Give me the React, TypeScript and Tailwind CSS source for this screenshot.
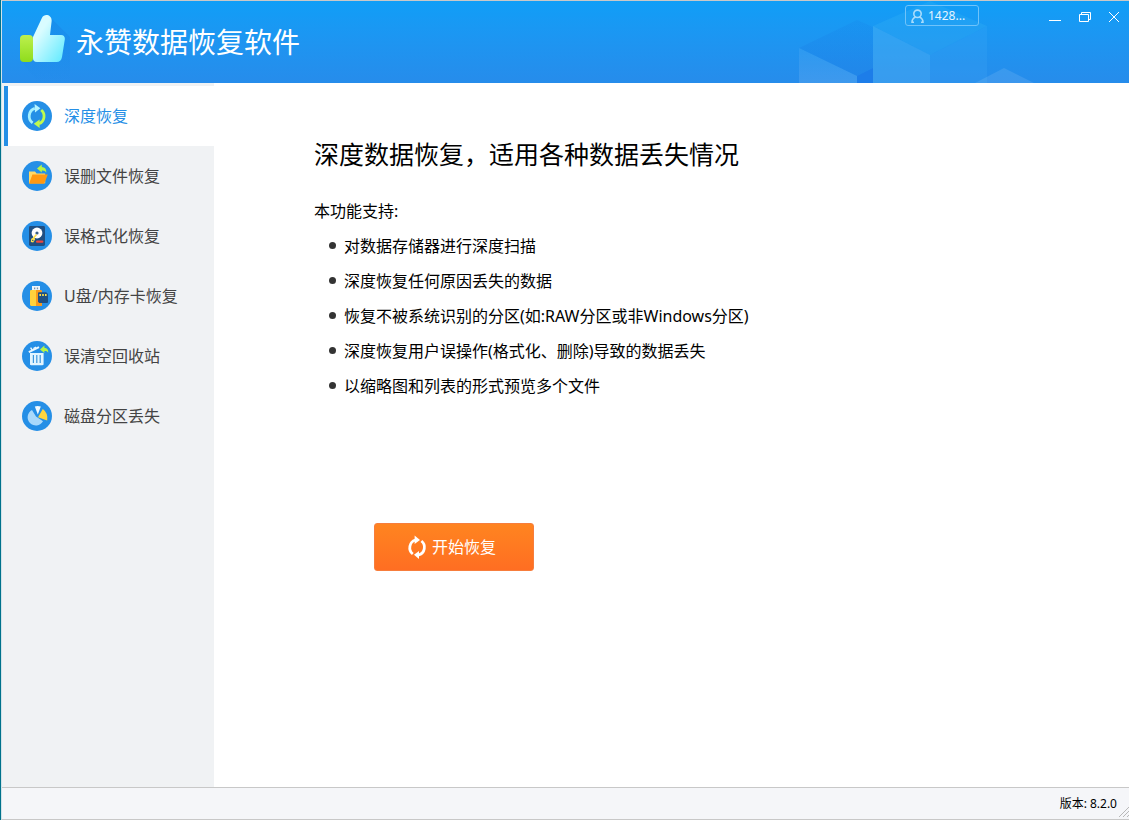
import React from "react";
import { clsx } from "clsx";

function DiskBase({ children }: { children: React.ReactNode }) {
  return (
    <svg width="30" height="30" viewBox="0 0 30 30" className="shrink-0" aria-hidden="true">
      <circle cx="15" cy="15" r="15" fill="#258fe6" />
      {children}
    </svg>
  );
}

function DeepIcon() {
  return (
    <DiskBase>
      <path d="M10.6 21.8A8.2 8.2 0 0 1 12.8 7.4" fill="none" stroke="#a5f0ff" strokeWidth="2.8" />
      <path d="M12.6 3l5.8 4.3-5.4 4.3z" fill="#b5f4ff" />
      <path d="M19.2 9A8.2 8.2 0 0 1 17 22.8" fill="none" stroke="#c0fa4e" strokeWidth="2.8" />
      <path d="M17.6 18.4v8.6l-5.8-4.2z" fill="#c0fa4e" />
    </DiskBase>
  );
}

function FolderIcon() {
  return (
    <DiskBase>
      <path d="M7 10.6h6l1.6 2h8.6v9.6H7z" fill="#ffd966" />
      <path d="M10.4 13.6h15.4l-3.6 9.2H7z" fill="#ff9811" />
      <path d="M15 7.4l4.8-3.8v2.4c3.2.2 4.8 2.2 4.4 5.8-.8-1.8-2-2.4-4.4-2.3v2z" fill="#b6f545" />
    </DiskBase>
  );
}

function HardDiskIcon() {
  return (
    <DiskBase>
      <rect x="7" y="5" width="16" height="20" rx="1.4" fill="#1f4f82" />
      <circle cx="15" cy="12" r="5.4" fill="#fff" />
      <circle cx="15" cy="12" r="1.6" fill="#3a5f86" />
      <path d="M14.4 13.6l-3 3.4" stroke="#ffe14a" strokeWidth="1.6" />
      <path d="M9.2 17.8l2.8-1.8 1.2 2.2-2 3.4-2.4-.6z" fill="#ffe14a" />
      <circle cx="10.8" cy="19.4" r=".7" fill="#1f4f82" />
      <rect x="14" y="19.4" width="7.4" height="2.4" rx="1.1" fill="#f0463e" />
    </DiskBase>
  );
}

function UsbIcon() {
  return (
    <DiskBase>
      <rect x="10" y="5" width="8" height="5" fill="#eef5fa" />
      <path d="M12 6.6h1.3v1.6H12zM14.8 6.6h1.3v1.6h-1.3z" fill="#8196a8" />
      <path d="M8 10.4c0-1 .5-1.4 1.4-1.4H14v16H9.4c-.9 0-1.4-.5-1.4-1.4z" fill="#ffd23c" />
      <path d="M14 9h4.600c.9 0 1.400.5 1.400 1.400V25h-6z" fill="#f79a1c" />
      <path d="M16 12.4c0-.8.4-1.2 1.2-1.200h7L26 13v7.800c0 .8-.4 1.200-1.200 1.200h-7.600L16 20.8z" fill="#1f4f82" />
      <path d="M17.400 13H19v2h-1.600zM20.200 13h1.600v2h-1.600zM23 13h1.600v2H23z" fill="#ffe14a" />
    </DiskBase>
  );
}

function TrashIcon() {
  return (
    <DiskBase>
      <path d="M8 12h13.600v11c0 .8-.4 1.200-1.200 1.200H9.200c-.8 0-1.200-.4-1.200-1.200z" fill="#e2f5ff" />
      <path d="M11.400 14v8M14.800 14v8M18.200 14v8" stroke="#3d97dd" strokeWidth="1.200" />
      <path d="M6.800 11.200L17 6.200" stroke="#eaf8ff" strokeWidth="2" />
      <path d="M10.200 9L8.600 6.600M11.400 7.600l2.600-1.400" fill="none" stroke="#eaf8ff" strokeWidth="1.400" />
      <path d="M18 8.400l4.400-3.800v2.200c2.800.2 4.200 2 3.800 5-.8-1.400-1.800-2-3.800-1.800v2z" fill="#b6f545" />
    </DiskBase>
  );
}

function PieIcon() {
  return (
    <DiskBase>
      <path d="M14 15.6L10 9a8.200 8.200 0 1 0 11 11.200z" fill="#a9d9fb" />
      <path d="M12.800 5.400q2.800-1 6 0L15.800 13.400z" fill="#f1faff" />
      <path d="M16 16.200l4.800-8.200q5.400 3.800 4.400 11.600z" fill="#ffd640" />
    </DiskBase>
  );
}

function LogoIcon() {
  return (
    <svg width="56" height="68" viewBox="0 0 56 68" className="shrink-0" aria-hidden="true">
      <defs>
        <linearGradient id="hand" x1="0" y1="0" x2="1" y2="1">
          <stop offset=".3" stopColor="#d9fcff" />
          <stop offset=".9" stopColor="#6decff" />
        </linearGradient>
        <linearGradient id="cuff" x1="0" y1="0" x2="0" y2="1">
          <stop offset="0" stopColor="#bdf04e" />
          <stop offset="1" stopColor="#8fdc1c" />
        </linearGradient>
        <linearGradient id="shade" x1="0" y1="0" x2="0" y2="1">
          <stop offset="0" stopColor="#1780e2" stopOpacity=".45" />
          <stop offset="1" stopColor="#1780e2" stopOpacity="0" />
        </linearGradient>
      </defs>
      <path d="M31 3L50 22V68H18L2 47z" fill="url(#shade)" />
      <rect x="0" y="20" width="13" height="27" rx="4" fill="url(#cuff)" />
      <path
        d="M13 22L22 2.800C24.400-2 32.400-.2 31.600 6.400L30 20h11c3 0 4.200 2 3.800 4.600L42 42c-.6 3.600-2.400 5-5.400 5H17c-2.600 0-4-1.600-4-4z"
        fill="url(#hand)"
      />
    </svg>
  );
}

function HeaderCubes() {
  return (
    <svg width="236" height="82" viewBox="0 0 236 82" aria-hidden="true">
      <defs>
        <linearGradient id="face" x1="0" y1="0" x2="0" y2="1">
          <stop offset="0" stopColor="#fff" stopOpacity=".06" />
          <stop offset="1" stopColor="#fff" stopOpacity=".11" />
        </linearGradient>
        <linearGradient id="top" x1="0" y1="0" x2="0" y2="1">
          <stop offset="0" stopColor="#1670e0" stopOpacity=".12" />
          <stop offset="1" stopColor="#1670e0" stopOpacity=".24" />
        </linearGradient>
      </defs>
      <path d="M0 47L58 19 74 26V67L58 75z" fill="url(#top)" />
      <path d="M0 47L58 75V82H0z" fill="url(#face)" />
      <path d="M58 75L74 67V82H58z" fill="#1d7de9" />
      <path d="M74 25L131 0 188 25 131 54z" fill="#3fc0f4" fillOpacity=".2" />
      <path d="M74 25L131 54V82H74z" fill="#62c0f6" fillOpacity=".3" />
      <path d="M131 54L188 25V82H131z" fill="#53b4f6" fillOpacity=".16" />
      <path d="M176 82L205 67 235 82z" fill="#fff" fillOpacity=".1" />
    </svg>
  );
}

const menu = [
  { label: "深度恢复", icon: <DeepIcon /> },
  { label: "误删文件恢复", icon: <FolderIcon /> },
  { label: "误格式化恢复", icon: <HardDiskIcon /> },
  { label: "U盘/内存卡恢复", icon: <UsbIcon /> },
  { label: "误清空回收站", icon: <TrashIcon /> },
  { label: "磁盘分区丢失", icon: <PieIcon /> },
];

const features = [
  "对数据存储器进行深度扫描",
  "深度恢复任何原因丢失的数据",
  "恢复不被系统识别的分区(如:RAW分区或非Windows分区)",
  "深度恢复用户误操作(格式化、删除)导致的数据丢失",
  "以缩略图和列表的形式预览多个文件",
];

function Header() {
  return (
    <header className="relative flex h-[82px] shrink-0 justify-between bg-linear-to-b from-[#0f9ef7] to-[#268ceb] text-white">
      <div className="absolute top-0 right-[94px]">
        <HeaderCubes />
      </div>
      <div className="flex items-start pt-3.5 pl-[18px]">
        <LogoIcon />
        <h1 className="text-[28px] leading-[54px]">永赞数据恢复软件</h1>
      </div>
      <div className="relative flex h-[29px] items-center">
        <button className="mr-[61px] flex h-[21px] w-[74px] items-center gap-1 rounded-[3px] border border-[#6fc3fa] pl-[5px] text-xs text-[#e3f4ff]">
          <svg width="13" height="14" viewBox="0 0 13 14" fill="none" stroke="#a9dcfc" strokeWidth="1.6" aria-hidden="true">
            <circle cx="6.5" cy="4.8" r="3.7" />
            <path d="M4.6 8C2.2 9 1 10.8 1 13.4h2M8.4 8c2.400 1 3.600 2.800 3.600 5.400h-2" />
          </svg>
          1428...
        </button>
        <div className="flex pt-0.5 pr-px">
          <button aria-label="最小化" className="flex w-[30px] justify-center">
            <svg width="14" height="14" viewBox="0 0 14 14" stroke="#fff" aria-hidden="true">
              <path d="M1 10.5h12" />
            </svg>
          </button>
          <button aria-label="还原" className="flex w-[30px] justify-center">
            <svg width="14" height="14" viewBox="0 0 14 14" fill="none" stroke="#fff" aria-hidden="true">
              <path d="M1.5 4.5h9v7h-9zM3.5 4.5v-2h9v7h-2" />
            </svg>
          </button>
          <button aria-label="关闭" className="flex w-7 justify-center">
            <svg width="14" height="14" viewBox="0 0 14 14" stroke="#fff" aria-hidden="true">
              <path d="M2 2l10 10M12 2L2 12" />
            </svg>
          </button>
        </div>
      </div>
    </header>
  );
}

function Sidebar() {
  return (
    <nav className="w-[212px] shrink-0 bg-[#f0f2f4] pt-[3px] pl-0.5">
      {menu.map((item, i) => (
        <button
          key={item.label}
          className={clsx(
            "flex h-[60px] w-full items-center gap-3 border-l-4 pl-3.5 text-base",
            i === 0 ? "border-[#258fe6] bg-white text-[#258fe6]" : "border-transparent text-[#444]"
          )}
        >
          {item.icon}
          {item.label}
        </button>
      ))}
    </nav>
  );
}

export default function App() {
  return (
    <div
      lang="zh-CN"
      className="flex min-h-screen border-l border-[#00728c] bg-white font-['Noto_Sans','Noto_Sans_CJK_SC',sans-serif] text-black"
    >
      <div className="flex flex-1 flex-col border-y border-l border-y-[#c8c8c8] border-l-[#d3e3e8]">
        <Header />
        <div className="flex flex-1">
          <Sidebar />
          <main className="flex-1 pt-[51px] pl-[100px]">
            <h2 className="text-[25px] leading-10">深度数据恢复，适用各种数据丢失情况</h2>
            <p className="mt-[25px] leading-6">本功能支持:</p>
            <ul className="mt-[5px] pl-[15px]">
              {features.map((text) => (
                <li key={text} className="flex h-[35px] items-center gap-2">
                  <span className="size-[7px] rounded-full bg-[#333]" />
                  {text}
                </li>
              ))}
            </ul>
            <button className="mt-[120px] ml-[60px] flex h-12 w-40 items-center gap-1 rounded-[3px] border border-[#f77d3c] bg-linear-to-b from-[#ff8420] to-[#ff6e22] pl-[31px] text-base text-white">
              <svg width="22" height="24" viewBox="0 0 22 24" aria-hidden="true">
                <path d="M6.8 19A7.8 8 0 0 1 9.4 5" fill="none" stroke="#fff" strokeWidth="2.8" />
                <path d="M8.6.6l5.4 4.4-5.400 4z" fill="#fff" />
                <path d="M15.4 6A7.8 8 0 0 1 12.8 20" fill="none" stroke="#fff" strokeWidth="2.8" />
                <path d="M13 16v8l-5-4.200z" fill="#fff" />
              </svg>
              开始恢复
            </button>
          </main>
        </div>
        <footer className="relative flex h-8 shrink-0 items-center justify-end border-t border-[#c8c8c8] bg-[#f5f6f9] pr-3 text-xs">
          版本: 8.2.0
          <svg width="10" height="10" viewBox="0 0 10 10" stroke="#b8b8b8" className="absolute right-0 bottom-0.5" aria-hidden="true">
            <path d="M0 10L10 0M4 10l6-6M8 10l2-2" />
          </svg>
        </footer>
      </div>
    </div>
  );
}
